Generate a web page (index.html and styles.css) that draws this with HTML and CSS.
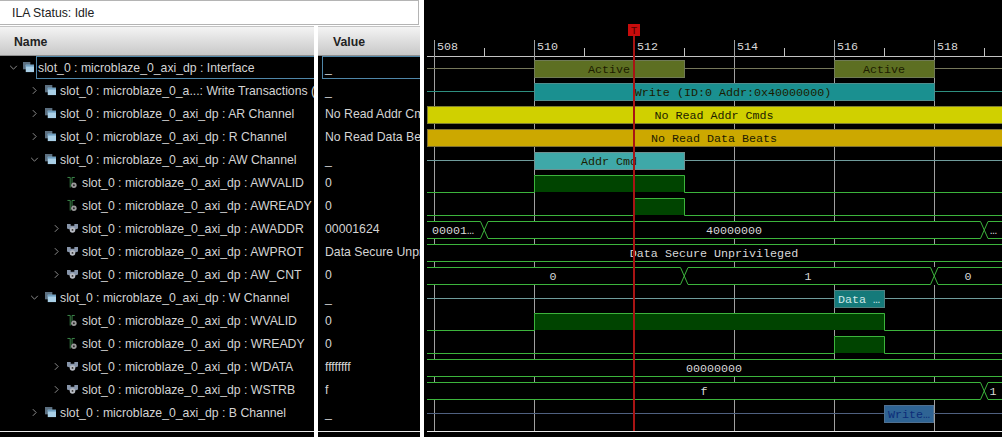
FILE: index.html
```html
<!DOCTYPE html>
<html lang="en">
<head>
  <meta charset="UTF-8" />
  <title>ILA Waveform</title>
  <link rel="stylesheet" href="styles.css">
</head>
<body>
  <svg class="defs" width="0" height="0">
    <symbol id="ico-group" viewBox="0 0 12 12">
      <rect x="0" y="0" width="8" height="8" fill="#5b6f80"/>
      <rect x="3" y="3" width="9" height="8" fill="#a9cfe6"/>
      <rect x="3" y="3" width="9" height="2" fill="#6f9fc0"/>
    </symbol>
    <symbol id="ico-bit" viewBox="0 0 12 14">
      <path d="M0.5 1.5H3.5V12.5" fill="none" stroke="#3f8f4f"/>
      <path d="M5.5 8V1.5H8.5" fill="none" stroke="#3f8f4f"/>
      <circle cx="7.5" cy="10" r="3" fill="#9a9a9a"/>
      <circle cx="7.5" cy="10" r="1" fill="#222"/>
    </symbol>
    <symbol id="ico-bus" viewBox="0 0 12 12">
      <path d="M0 1H4V3H8V1H12V6L9 7H3L0 6Z" fill="#8795aa"/>
      <circle cx="6" cy="7.5" r="3" fill="#b8bcc4"/>
      <circle cx="6" cy="7.5" r="1" fill="#333"/>
    </symbol>
    <symbol id="chev-right" viewBox="0 0 6 10">
      <path d="M1 1L5 5L1 9" fill="none" stroke="#8a8a8a" stroke-width="1.2"/>
    </symbol>
    <symbol id="chev-down" viewBox="0 0 10 6">
      <path d="M1 1L5 5L9 1" fill="none" stroke="#8a8a8a" stroke-width="1.2"/>
    </symbol>
  </svg>

  <div class="app">
    <div class="panel">
      <div class="status">ILA Status: Idle</div>
      <div class="columns">
        <div class="col col-name">
          <div class="col-head">Name</div>
          <div class="col-body">
            <div class="row lvl-0 selected"><svg class="chev-d"><use href="#chev-down"/></svg><svg class="ico"><use href="#ico-group"/></svg><span class="label">slot_0 : microblaze_0_axi_dp : Interface</span></div>
            <div class="row lvl-1"><svg class="chev-r"><use href="#chev-right"/></svg><svg class="ico"><use href="#ico-group"/></svg><span class="label">slot_0 : microblaze_0_a...: Write Transactions (ID:0)</span></div>
            <div class="row lvl-1"><svg class="chev-r"><use href="#chev-right"/></svg><svg class="ico"><use href="#ico-group"/></svg><span class="label">slot_0 : microblaze_0_axi_dp : AR Channel</span></div>
            <div class="row lvl-1"><svg class="chev-r"><use href="#chev-right"/></svg><svg class="ico"><use href="#ico-group"/></svg><span class="label">slot_0 : microblaze_0_axi_dp : R Channel</span></div>
            <div class="row lvl-1"><svg class="chev-d"><use href="#chev-down"/></svg><svg class="ico"><use href="#ico-group"/></svg><span class="label">slot_0 : microblaze_0_axi_dp : AW Channel</span></div>
            <div class="row lvl-2"><span class="no-chev"></span><svg class="ico ico-tall"><use href="#ico-bit"/></svg><span class="label">slot_0 : microblaze_0_axi_dp : AWVALID</span></div>
            <div class="row lvl-2"><span class="no-chev"></span><svg class="ico ico-tall"><use href="#ico-bit"/></svg><span class="label">slot_0 : microblaze_0_axi_dp : AWREADY</span></div>
            <div class="row lvl-2"><svg class="chev-r"><use href="#chev-right"/></svg><svg class="ico"><use href="#ico-bus"/></svg><span class="label">slot_0 : microblaze_0_axi_dp : AWADDR</span></div>
            <div class="row lvl-2"><svg class="chev-r"><use href="#chev-right"/></svg><svg class="ico"><use href="#ico-bus"/></svg><span class="label">slot_0 : microblaze_0_axi_dp : AWPROT</span></div>
            <div class="row lvl-2"><svg class="chev-r"><use href="#chev-right"/></svg><svg class="ico"><use href="#ico-bus"/></svg><span class="label">slot_0 : microblaze_0_axi_dp : AW_CNT</span></div>
            <div class="row lvl-1"><svg class="chev-d"><use href="#chev-down"/></svg><svg class="ico"><use href="#ico-group"/></svg><span class="label">slot_0 : microblaze_0_axi_dp : W Channel</span></div>
            <div class="row lvl-2"><span class="no-chev"></span><svg class="ico ico-tall"><use href="#ico-bit"/></svg><span class="label">slot_0 : microblaze_0_axi_dp : WVALID</span></div>
            <div class="row lvl-2"><span class="no-chev"></span><svg class="ico ico-tall"><use href="#ico-bit"/></svg><span class="label">slot_0 : microblaze_0_axi_dp : WREADY</span></div>
            <div class="row lvl-2"><svg class="chev-r"><use href="#chev-right"/></svg><svg class="ico"><use href="#ico-bus"/></svg><span class="label">slot_0 : microblaze_0_axi_dp : WDATA</span></div>
            <div class="row lvl-2"><svg class="chev-r"><use href="#chev-right"/></svg><svg class="ico"><use href="#ico-bus"/></svg><span class="label">slot_0 : microblaze_0_axi_dp : WSTRB</span></div>
            <div class="row lvl-1"><svg class="chev-r"><use href="#chev-right"/></svg><svg class="ico"><use href="#ico-group"/></svg><span class="label">slot_0 : microblaze_0_axi_dp : B Channel</span></div>
          </div>
          <div class="col-end"></div>
        </div>
        <div class="col col-value">
          <div class="col-head">Value</div>
          <div class="col-body">
            <div class="row selected"><span class="label">_</span></div>
            <div class="row"><span class="label">_</span></div>
            <div class="row"><span class="label">No Read Addr Cmds</span></div>
            <div class="row"><span class="label">No Read Data Beats</span></div>
            <div class="row"><span class="label">_</span></div>
            <div class="row"><span class="label">0</span></div>
            <div class="row"><span class="label">0</span></div>
            <div class="row"><span class="label">00001624</span></div>
            <div class="row"><span class="label">Data Secure Unprivileged</span></div>
            <div class="row"><span class="label">0</span></div>
            <div class="row"><span class="label">_</span></div>
            <div class="row"><span class="label">0</span></div>
            <div class="row"><span class="label">0</span></div>
            <div class="row"><span class="label">ffffffff</span></div>
            <div class="row"><span class="label">f</span></div>
            <div class="row"><span class="label">_</span></div>
          </div>
          <div class="col-end"></div>
        </div>
      </div>
    </div>

    <!-- waveform: viewBox keeps x values in page pixels -->
    <svg class="wave" width="578" height="437" viewBox="424 0 578 437">
      <!-- ruler -->
      <path class="ruler" d="M427 56.5H1002M484.5 48V56M584.5 48V56M684.5 48V56M784.5 48V56M884.5 48V56M984.5 48V56"/>
      <path class="grid" d="M434.5 40V431M534.5 40V431M634.5 40V431M734.5 40V431M834.5 40V431M934.5 40V431"/>
      <text class="t-bus" x="437" y="50">508</text>
      <text class="t-bus" x="537" y="50">510</text>
      <text class="t-bus" x="637" y="50">512</text>
      <text class="t-bus" x="737" y="50">514</text>
      <text class="t-bus" x="837" y="50">516</text>
      <text class="t-bus" x="937" y="50">518</text>

      <!-- interface -->
      <path class="ln-olive" d="M427 68.5H534M685 68.5H834M934 68.5H1002"/>
      <rect class="bar-olive" x="534.5" y="60.5" width="150" height="17"/>
      <rect class="bar-olive" x="834.5" y="60.5" width="100" height="17"/>
      <text class="t-bar" x="609" y="73" text-anchor="middle">Active</text>
      <text class="t-bar" x="884" y="73" text-anchor="middle">Active</text>

      <!-- write transactions -->
      <path class="ln-teal" d="M427 91.5H534M934 91.5H1002"/>
      <rect class="bar-teal" x="534.5" y="83.5" width="400" height="17"/>
      <text class="t-bar" x="733" y="96" text-anchor="middle">Write (ID:0 Addr:0x40000000)</text>

      <!-- read channels -->
      <rect class="bar-yellow" x="427.5" y="106.5" width="575" height="17"/>
      <text class="t-bar" x="714" y="119" text-anchor="middle">No Read Addr Cmds</text>
      <rect class="bar-gold" x="427.5" y="129.5" width="575" height="17"/>
      <text class="t-bar" x="714" y="142" text-anchor="middle">No Read Data Beats</text>

      <!-- AW channel -->
      <path class="ln-aqua" d="M427 160.5H534M685 160.5H1002"/>
      <rect class="bar-aqua" x="534.5" y="152.5" width="150" height="17"/>
      <text class="t-bar" x="609" y="165" text-anchor="middle">Addr Cmd</text>

      <rect class="high" x="534" y="175" width="151" height="17"/>
      <path class="sig" d="M427 192.5H534.5V175.5H684.5V192.5H1002"/>
      <rect class="high" x="634" y="198" width="51" height="17"/>
      <path class="sig" d="M427 215.5H634.5V198.5H684.5V215.5H1002"/>

      <rect class="bus-bg" x="427" y="221" width="575" height="18"/>
      <path class="sig" d="M427 221.5H480.5L488 238.5H980.5L988 221.5H1002M427 238.5H480.5L488 221.5H980.5L988 238.5H1002"/>
      <text class="t-bus" x="432" y="234">00001…</text>
      <text class="t-bus" x="734" y="234" text-anchor="middle">40000000</text>
      <text class="t-bus" x="990" y="234">…</text>

      <rect class="bus-bg" x="427" y="244" width="575" height="18"/>
      <path class="sig" d="M427 244.5H1002M427 261.5H1002"/>
      <text class="t-bus" x="714" y="257" text-anchor="middle">Data Secure Unprivileged</text>

      <rect class="bus-bg" x="427" y="267" width="575" height="18"/>
      <path class="sig" d="M427 267.5H680.5L688 284.5H930.5L938 267.5H1002M427 284.5H680.5L688 267.5H930.5L938 284.5H1002"/>
      <text class="t-bus" x="553" y="280" text-anchor="middle">0</text>
      <text class="t-bus" x="808" y="280" text-anchor="middle">1</text>
      <text class="t-bus" x="968" y="280" text-anchor="middle">0</text>

      <!-- W channel -->
      <path class="ln-aqua" d="M427 298.5H834M885 298.5H1002"/>
      <rect class="bar-data" x="834.5" y="290.5" width="50" height="17"/>
      <text class="t-pale" x="838" y="303">Data …</text>

      <rect class="high" x="534" y="313" width="351" height="17"/>
      <path class="sig" d="M427 330.5H534.5V313.5H884.5V330.5H1002"/>
      <rect class="high" x="834" y="336" width="51" height="17"/>
      <path class="sig" d="M427 353.5H834.5V336.5H884.5V353.5H1002"/>

      <rect class="bus-bg" x="427" y="359" width="575" height="18"/>
      <path class="sig" d="M427 359.5H1002M427 376.5H1002"/>
      <text class="t-bus" x="714" y="372" text-anchor="middle">00000000</text>

      <rect class="bus-bg" x="427" y="382" width="575" height="18"/>
      <path class="sig" d="M427 382.5H980.5L988 399.5H1002M427 399.5H980.5L988 382.5H1002"/>
      <text class="t-bus" x="704" y="395" text-anchor="middle">f</text>
      <text class="t-bus" x="993" y="395" text-anchor="middle">1</text>

      <!-- B channel -->
      <path class="ln-slate" d="M427 413.5H884M934 413.5H1002"/>
      <rect class="bar-blue" x="884.5" y="405.5" width="49" height="17"/>
      <text class="t-blue" x="888" y="418">Write…</text>

      <path class="baseline" d="M427 431.5H1002"/>

      <!-- cursor -->
      <path class="cursor" d="M634 36V431"/>
      <rect class="cursor-head" x="628" y="24" width="12" height="12"/>
      <text class="t-head" x="634" y="34" text-anchor="middle">T</text>
    </svg>
  </div>
</body>
</html>
```

FILE: styles.css
```css
/* Base */
body {
  margin: 0;
  background: #fff;
  font-family: 'Liberation Sans', Arial, sans-serif;
  font-size: 12.25px;
  overflow: hidden;
}
.defs {
  position: absolute;
}
.app {
  display: flex;
  height: 437px;
}

/* Left side: status box and the two columns */
.panel {
  width: 424px;
  flex: none;
  display: flex;
  flex-direction: column;
}
.status {
  width: 406px;
  height: 23px;
  line-height: 25px;
  padding-left: 12px;
  border: 1px solid #b4b4b4;
  border-left: none;
  color: #222;
}
.columns {
  display: flex;
  gap: 4px;
  margin-top: 1px;
  flex: 1;
  min-height: 0;
}
.col {
  display: flex;
  flex-direction: column;
  background: #000;
}
.col-name {
  width: 314px;
}
.col-value {
  width: 102px;
}
.col-head {
  height: 30px;
  line-height: 30px;
  flex: none;
  box-sizing: border-box;
  padding-left: 14px;
  font-weight: bold;
  color: #222;
  background: linear-gradient(#f4f4f4, #c8c8c8);
  border-top: 1px solid #c4c4c4;
  border-bottom: 1px solid #8f8f8f;
}
.col-value .col-head {
  padding-left: 15px;
}
.col-body {
  flex: 1;
}
.col-end {
  height: 5px;
  flex: none;
  border-top: 1px solid #e8e8e8;
}

/* Tree rows */
.row {
  height: 23px;
  display: flex;
  align-items: center;
  color: #d4d4d4;
  white-space: nowrap;
  overflow: hidden;
  box-sizing: border-box;
  position: relative;
}
.col-value .row {
  padding-left: 7px;
}
.lvl-0 {
  padding-left: 9px;
}
.lvl-1 {
  padding-left: 32px;
}
.lvl-2 {
  padding-left: 54px;
}
.chev-r {
  width: 5px;
  height: 9px;
  flex: none;
  margin-right: 8px;
}
.chev-d {
  width: 9px;
  height: 5px;
  flex: none;
  margin-right: 6px;
  margin-left: -2px;
}
.lvl-0 .chev-d {
  margin-left: 0;
  margin-right: 5px;
}
.no-chev {
  width: 13px;
  flex: none;
}
.ico {
  width: 11px;
  height: 11px;
  flex: none;
  margin-right: 4px;
}
.ico-tall {
  height: 13px;
}
.label {
  flex: none;
}

/* selection box, open on the right like the table cell it marks */
.selected::after {
  content: "";
  position: absolute;
  right: 0;
  top: 0;
  bottom: 0;
  border: 1px solid #4f86a8;
  border-right: none;
}
.col-name .selected::after {
  left: 36px;
}
.col-value .selected::after {
  left: 4px;
}

/* Waveform */
.wave {
  flex: none;
  display: block;
  background: #000;
}
.wave path {
  fill: none;
  stroke-width: 1;
}
.wave text {
  font-family: 'Liberation Mono', 'Courier New', monospace;
  font-size: 11.7px;
}
.ruler {
  stroke: #c4c4c4;
}
.grid {
  stroke: #a0a0a0;
}
.baseline {
  stroke: #e8e8e8;
}
.sig {
  stroke: #3cb43c;
}
.high {
  fill: #004400;
}
.bus-bg {
  fill: #000;
}
.wave .cursor {
  stroke: #a81414;
  stroke-width: 2;
}
.cursor-head {
  fill: #c80c0c;
}

/* Lane lines and bars */
.ln-olive {
  stroke: #75775a;
}
.ln-teal {
  stroke: #2e8f80;
}
.ln-aqua {
  stroke: #6f9c9c;
}
.ln-slate {
  stroke: #4f6080;
}
.bar-olive {
  fill: #5d6f22;
  stroke: #6f7a55;
}
.bar-teal {
  fill: #1a9090;
  stroke: #4f8f8f;
}
.bar-yellow {
  fill: #d0d000;
  stroke: #7f7f30;
}
.bar-gold {
  fill: #cca800;
  stroke: #7f7030;
}
.bar-aqua {
  fill: #3fa8a8;
  stroke: #6f9090;
}
.bar-data {
  fill: #157a7a;
  stroke: #4f8080;
}
.bar-blue {
  fill: #2f6494;
  stroke: #4f7090;
}

/* Waveform text */
.t-bus {
  fill: #d8d8d8;
}
.t-bar {
  fill: #1c1c00;
}
.t-pale {
  fill: #cfe8e8;
}
.t-blue {
  fill: #0c2c78;
}
.wave .t-head {
  fill: #4a0000;
  font-size: 11px;
}
```
